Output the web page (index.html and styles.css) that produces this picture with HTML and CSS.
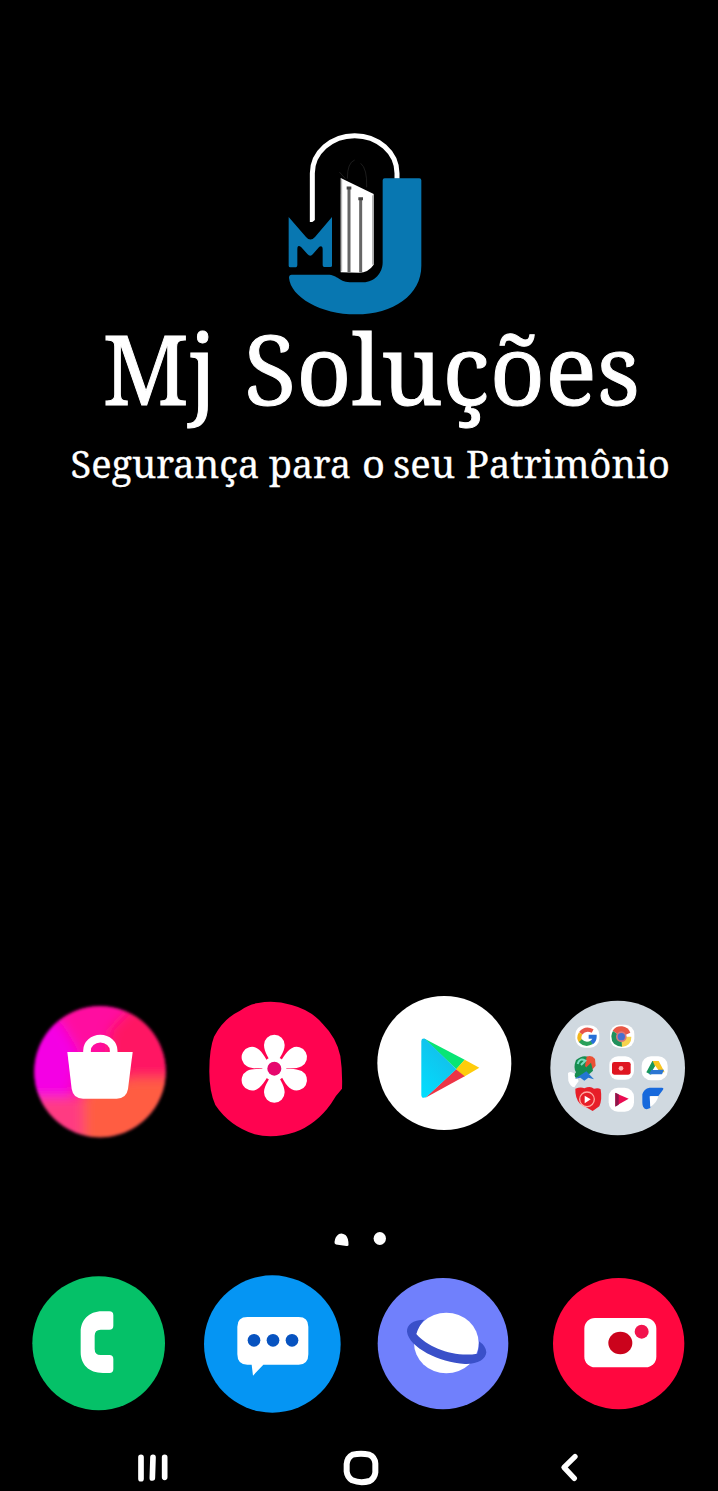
FILE: index.html
```html
<!DOCTYPE html>
<html lang="pt-BR">
<head>
<meta charset="utf-8">
<title>Mj Soluções</title>
<link rel="stylesheet" href="styles.css">
</head>
<body>
<main class="screen">
  <header class="brand">
    <svg class="logo" viewBox="0 0 510 615" aria-label="Logo">
      <path d="M127 306V160A127 113 0 0 1 381 160V176" fill="none" stroke="#fff" stroke-width="15"/>
      <path d="M118 313l20-15v15z" fill="#000"/>
      <path d="M232 176q0-48 22-56M272 130q20 16 18 72M208 156l18 20" fill="none" stroke="#2b2b2b" stroke-width="2"/>
      <path d="M212 174l99 48v212q-16 24-44 24l-55-1z" fill="#fff"/>
      <path d="M237 202V457M272 235V457" stroke="#666" stroke-width="9"/>
      <path d="M230 204h14M265 236h14" stroke="#444" stroke-width="9"/>
      <path d="M215 178V454M308 226V434" stroke="#aaa" stroke-width="3"/>
      <path d="M56 291l52 60q13 15 27 0l51-60v146q0 4-5 4h-18q-5 0-5-5v-48q0-12-10-8l-19 22q-8 10-17 0l-18-20q-12-10-12 6v46q0 8-7 8H61q-5 0-5-5z" fill="#0877b1"/>
      <path d="M344 175h104q6 0 6 6v256c0 88-84 146-196 146-106 0-196-52-201-110q0-9 8-9h108c32 0 32 23 74 23h33c34 0 58-28 58-60V181q0-6 6-6z" fill="#0877b1"/>
    </svg>
    <svg class="wordmark" viewBox="0 325 718 175">
      <g class="title">
        <text x="102.500" y="405" textLength="114" lengthAdjust="spacingAndGlyphs">Mj</text>
        <text x="244" y="405" textLength="396" lengthAdjust="spacingAndGlyphs">Soluções</text>
      </g>
      <g class="tagline">
        <text x="70.500" y="477.500" textLength="189" lengthAdjust="spacingAndGlyphs">Segurança</text>
        <text x="269" y="477.500" textLength="82" lengthAdjust="spacingAndGlyphs">para</text>
        <text x="362" y="477.500" textLength="23" lengthAdjust="spacingAndGlyphs">o</text>
        <text x="393" y="477.500" textLength="62" lengthAdjust="spacingAndGlyphs">seu</text>
        <text x="466" y="477.500" textLength="204" lengthAdjust="spacingAndGlyphs">Patrimônio</text>
      </g>
    </svg>
  </header>

  <section class="row apps">
    <svg class="icon" viewBox="0 0 480 480">
      <defs>
        <clipPath id="disc"><circle cx="240" cy="245" r="197"/></clipPath>
        <filter id="soft" x="-20%" y="-20%" width="140%" height="140%"><feGaussianBlur stdDeviation="18"/></filter>
        <filter id="edge"><feGaussianBlur stdDeviation="5"/></filter>
      </defs>
      <g filter="url(#edge)"><g clip-path="url(#disc)">
        <path d="M0 0h480v480H0z" fill="#ff0da0"/>
        <g filter="url(#soft)">
          <path d="M0 60l120 30 60 100-30 130H0z" fill="#f400e4"/>
          <path d="M270 120l80-80 130 80v160H260z" fill="#ff1464"/>
          <path d="M-60 320h260v220H-60z" fill="#ff3b82"/>
          <path d="M190 300l150-35h200v275H190z" fill="#ff5d43"/>
        </g>
      </g></g>
      <path d="M201 190v-8a40 36 0 0 1 80 0v8" fill="none" stroke="#fff" stroke-width="23"/>
      <path d="M142 186H338L324 297q-5 29-34 29H189q-29 0-34-29z" fill="#fff"/>
    </svg>
    <svg class="icon" viewBox="0 0 480 480">
      <path d="M190 39Q237 29 290 45 350 61 384 103 424 143 436 198 443 245 441 296 422 316 408 341 365 402 299 427 235 447 179 433 103 408 61 345 42 303 43 240 43 177 57 140 86 85 135 62 160 43 190 39z" fill="#ff0350"/>
      <g fill="#fff">
        <path id="petal" d="M237 236C224 207 207 187 207 165a31 31 0 0 1 62 0C269 187 250 207 237 236z"/>
        <use href="#petal" transform="translate(5 0) rotate(61 238 236)"/><use href="#petal" transform="translate(5 0) rotate(119 238 236)"/>
        <use href="#petal" transform="rotate(180 238 236)"/><use href="#petal" transform="translate(-5 0) rotate(241 238 236)"/>
        <use href="#petal" transform="translate(-5 0) rotate(299 238 236)"/><circle cx="238" cy="236" r="36"/>
      </g>
      <circle cx="238" cy="236" r="21" fill="#e6066d"/>
    </svg>
    <svg class="icon" viewBox="0 15 480 480">
      <defs><linearGradient id="cyan" x1="0" y1="1" x2=".6" y2="0"><stop stop-color="#00dfff"/><stop offset="1" stop-color="#16bce8"/></linearGradient></defs>
      <circle cx="238" cy="234" r="201" fill="#fff"/>
      <path d="M176 160L299 224 274 253z" fill="#08e574"/>
      <path d="M299 224L343 248 297 275 273 253z" fill="#ffcc0b"/>
      <path d="M273 253L299 274 180 339z" fill="#ed3446"/>
      <path d="M169 168q0-11 12-6L274 253 184 336q-15 7-15-7z" fill="url(#cyan)"/>
    </svg>
    <svg class="icon" viewBox="0 0 480 480">
      <circle cx="233" cy="234" r="202" fill="#d0d9e0"/>
      <g fill="#fff">
        <rect x="106" y="106" width="72" height="67" rx="28"/><rect x="210" y="104" width="73" height="70" rx="28"/>
        <rect x="208" y="199" width="74" height="70" rx="26"/><rect x="305" y="199" width="78" height="72" rx="28"/>
        <rect x="206" y="293" width="76" height="72" rx="28"/><path d="M84 249q10-9 24 6l8 18-13 19q-13-3-18-20z"/>
      </g>
      <g fill="none" stroke-width="12">
        <path d="M122 130q14-18 36-7" stroke="#e85549"/><path d="M122 130q-8 13 0 24" stroke="#f2b51b"/>
        <path d="M121 152q15 16 35 5" stroke="#28a05a"/><path d="M146 140h18q0 11-9 18" stroke="#276fd8"/>
      </g>
      <path d="M244 140L218 122a30 30 0 0 1 53 6z" fill="#e95745"/>
      <path d="M244 140h30q1 27-29 31z" fill="#f7d34d"/>
      <path d="M244 140l2 30q-32-2-32-31 0-9 5-16z" fill="#20905c"/>
      <circle cx="244" cy="140" r="16" fill="#d9777a"/><circle cx="244" cy="140" r="11" fill="#4770ce"/>
      <path d="M108 210q24-20 45-5l-15 31-30 29q-8-8 0-18-9-14 0-37z" fill="#168d50"/>
      <path d="M140 200q16-6 25 7l2 20-12 14-20-12z" fill="#ea5135"/>
      <path d="M108 262l45-44 6 24-20 18z" fill="#168d50"/>
      <path d="M104 267l35-23 23 24-17-5-12 9-12-9z" fill="#2576d1"/>
      <path d="M113 222q5-20 23-10l-13 13" fill="none" stroke="#7cddc2" stroke-width="6"/>
      <rect x="216" y="216" width="56" height="38" rx="7" fill="#df1520"/><circle cx="243" cy="235" r="7" fill="#ffb7b3"/>
      <path d="M337 213h18l-22 41-14-7z" fill="#16965b"/><path d="M338 213h18l18 34h-21z" fill="#f9c51f"/>
      <path d="M334 239h38l-6 14h-39z" fill="#2c76d2"/><path d="M346 227l9 13h-17z" fill="#fff"/>
      <path d="M106 296q17-7 27-1 18-8 29 1 13-4 20 2 5 31-4 51l-20 14-38-22q-15-16-14-45z" fill="#e71e28"/>
      <circle cx="141" cy="328" r="22" fill="none" stroke="#ffaaa2" stroke-width="4"/><path d="M134 317l18 11-18 12z" fill="#fff"/>
      <path d="M226 309l40 17-40 23z" fill="#ea0b51"/><path d="M226 308v42l10-6v-31z" fill="#8c174a"/>
      <path d="M307 313q4-17 22-20h37q6 0 3 6l-14 19h-24v36l-11 4q-13-2-13-20z" fill="#1769dc"/><path d="M329 319h26q-4 20-24 31z" fill="#fff"/>
    </svg>
  </section>

  <div class="pages">
    <svg viewBox="0 0 60 20"><path d="M4.500 12Q5 6.500 9 4q3-1.500 6.500 1Q18.700 8 18.500 15.300q-.5 1-2 .7L6 14.500q-1.800-.6-1.500-2.500z"/><ellipse cx="49.800" cy="8.500" rx="6.200" ry="6.500"/></svg>
  </div>

  <section class="row dock">
    <svg class="icon" viewBox="0 0 480 480">
      <ellipse cx="236" cy="235" rx="199" ry="201" fill="#05c168"/>
      <path d="M268 139h-22c-40 0-64 27-64 62v61c0 36 24 62 67 62h19q12 0 12-12v-30q0-12-12-12h-26q-18 0-18-18v-40q0-18 18-18h26q12 0 12-12v-31q0-12-12-12z" fill="#fff"/>
    </svg>
    <svg class="icon" viewBox="0 0 480 480">
      <ellipse cx="232" cy="237" rx="205" ry="206" fill="#0595f3"/>
      <path d="M157 156H311q29 0 29 29v83q0 31-29 31H205L174 332 170 299H157q-30 0-30-31v-83q0-29 30-29z" fill="#fff"/>
      <g fill="#0753c0"><circle cx="177" cy="226" r="19"/><circle cx="234" cy="226" r="19"/><circle cx="291" cy="226" r="19"/></g>
    </svg>
    <svg class="icon" viewBox="0 0 480 480">
      <ellipse cx="234" cy="236" rx="196" ry="197" fill="#7080fc"/>
      <ellipse cx="244" cy="234" rx="97" ry="91" fill="#fff"/>
      <path d="M178 164C143 165 125 179 126 200C132 247 222 292 300 297C338 298 362 284 364 262Q363 243 342 229Q344 246 337 266C270 278 190 249 154 207Q161 182 178 164z" fill="#3a50c9"/>
    </svg>
    <svg class="icon" viewBox="0 0 480 480">
      <circle cx="236" cy="236" r="197" fill="#ff073f"/>
      <rect x="133" y="159" width="216" height="148" rx="32" fill="#fff"/>
      <ellipse cx="241" cy="234" rx="36" ry="34" fill="#cb031c"/><circle cx="305" cy="200" r="21" fill="#f2134d"/>
    </svg>
  </section>

  <nav class="nav">
    <svg viewBox="0 0 1434 123">
      <path d="M63 22V86M99 22L97 84M134 22V82" stroke="#fff" stroke-width="17" stroke-linecap="round"/>
      <path d="M698 14q25-5 50 0 17 7 18 27v26q-2 17-17 26-28 8-52-2-15-9-17-27V42q2-20 18-28z" fill="none" stroke="#fff" stroke-width="18"/>
      <path d="M1365 20L1332 52 1363 85" fill="none" stroke="#fff" stroke-width="16" stroke-linecap="round" stroke-linejoin="round"/>
    </svg>
  </nav>
</main>
</body>
</html>
```
FILE: styles.css
```css
body { margin: 0; background: #000; }
svg { display: block; }
.screen { display: flex; flex-direction: column; width: 718px; height: 1491px; overflow: hidden; background: #000; }
.brand { display: flex; flex-direction: column; padding-top: 120px; height: 990px; box-sizing: border-box; }
.logo { width: 170px; height: 205px; margin-left: 270px; }
.wordmark { width: 718px; height: 175px; overflow: visible; }
.wordmark text { fill: #fff; stroke: #fff; font-family: "Noto Serif", "Droid Serif", "DejaVu Serif Condensed", "DejaVu Serif", serif; }
.title { font-size: 97px; stroke-width: 1; }
.tagline { font-size: 38.500px; stroke-width: .3; }
.row { display: grid; grid-template-columns: 175px 170px 175px 160px; padding-left: 20px; height: 160px; }
.icon { width: 160px; height: 160px; }
.pages { display: flex; justify-content: center; height: 35px; padding-top: 80px; }
.pages svg { width: 60px; height: 20px; margin-left: 1px; fill: #fff; }
.nav { display: flex; padding: 25px 0 0 120px; }
.nav svg { width: 478px; height: 41px; }
```
